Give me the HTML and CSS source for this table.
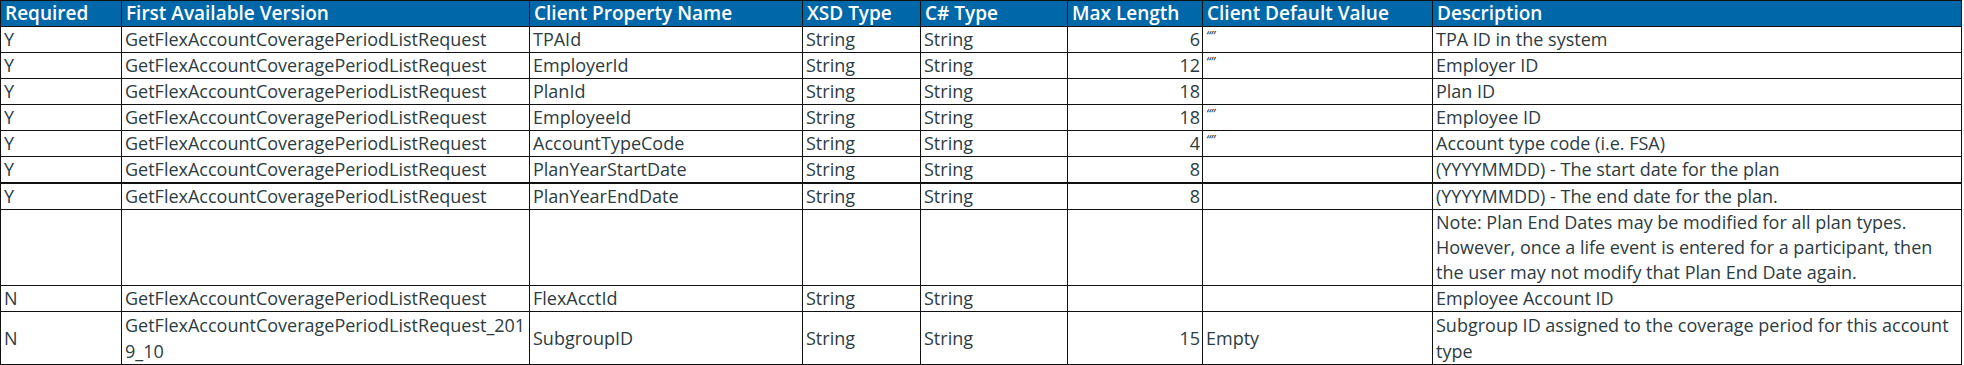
FILE: index.html
```html
<!DOCTYPE html>
<html>
<head>
<meta charset="utf-8">
<link rel="stylesheet" href="styles.css">
</head>
<body>
<table class="spec">
  <colgroup>
    <col class="c-req"><col class="c-ver"><col class="c-prop"><col class="c-xsd"><col class="c-cs"><col class="c-max"><col class="c-def"><col class="c-desc">
  </colgroup>
  <thead>
    <tr>
      <th>Required</th><th>First Available Version</th><th>Client Property Name</th><th>XSD Type</th><th>C# Type</th><th>Max Length</th><th>Client Default Value</th><th>Description</th>
    </tr>
  </thead>
  <tbody>
    <tr><td>Y</td><td>GetFlexAccountCoveragePeriodListRequest</td><td>TPAId</td><td>String</td><td>String</td><td class="num">6</td><td><span class="q">“”</span></td><td>TPA ID in the system</td></tr>
    <tr><td>Y</td><td>GetFlexAccountCoveragePeriodListRequest</td><td>EmployerId</td><td>String</td><td>String</td><td class="num">12</td><td><span class="q">“”</span></td><td>Employer ID</td></tr>
    <tr><td>Y</td><td>GetFlexAccountCoveragePeriodListRequest</td><td>PlanId</td><td>String</td><td>String</td><td class="num">18</td><td></td><td>Plan ID</td></tr>
    <tr><td>Y</td><td>GetFlexAccountCoveragePeriodListRequest</td><td>EmployeeId</td><td>String</td><td>String</td><td class="num">18</td><td><span class="q">“”</span></td><td>Employee ID</td></tr>
    <tr><td>Y</td><td>GetFlexAccountCoveragePeriodListRequest</td><td>AccountTypeCode</td><td>String</td><td>String</td><td class="num">4</td><td><span class="q">“”</span></td><td>Account type code (i.e. FSA)</td></tr>
    <tr class="thick"><td>Y</td><td>GetFlexAccountCoveragePeriodListRequest</td><td>PlanYearStartDate</td><td>String</td><td>String</td><td class="num">8</td><td></td><td>(YYYYMMDD) - The start date for the plan</td></tr>
    <tr><td>Y</td><td>GetFlexAccountCoveragePeriodListRequest</td><td>PlanYearEndDate</td><td>String</td><td>String</td><td class="num">8</td><td></td><td>(YYYYMMDD) - The end date for the plan.</td></tr>
    <tr><td></td><td></td><td></td><td></td><td></td><td></td><td></td><td>Note: Plan End Dates may be modified for all plan types. However, once a life event is entered for a participant, then the user may not modify that Plan End Date again.</td></tr>
    <tr><td>N</td><td>GetFlexAccountCoveragePeriodListRequest</td><td>FlexAcctId</td><td>String</td><td>String</td><td class="num"></td><td></td><td>Employee Account ID</td></tr>
    <tr class="last"><td>N</td><td>GetFlexAccountCoveragePeriodListRequest_2019_10</td><td>SubgroupID</td><td>String</td><td>String</td><td class="num">15</td><td>Empty</td><td>Subgroup ID assigned to the coverage period for this account type</td></tr>
  </tbody>
</table>
</body>
</html>
```

FILE: styles.css
```css
html, body {
  margin: 0;
  padding: 0;
  background: #ffffff;
}

.spec {
  border-collapse: collapse;
  table-layout: fixed;
  width: 1961px;
  font-family: "Open Sans", "Liberation Sans", sans-serif;
  font-size: 18px;
  color: #2d3c3f;
}

.c-req { width: 121px; }
.c-ver { width: 408px; }
.c-prop { width: 273px; }
.c-xsd { width: 118px; }
.c-cs { width: 147px; }
.c-max { width: 135px; }
.c-def { width: 230px; }
.c-desc { width: 529px; }

.spec th {
  background: #0068a9;
  color: #ffffff;
  font-weight: 600;
  font-size: 19px;
  text-align: left;
  line-height: 25px;
  padding: 0 4px;
  border: 1px solid #111111;
  white-space: nowrap;
}

.spec td {
  line-height: 25px;
  padding: 0 3px;
  border: 1px solid #111111;
  vertical-align: middle;
  word-break: break-all;
}

.spec tr.last td {
  line-height: 26px;
}

.spec td:last-child {
  word-break: normal;
}

.spec td.num {
  text-align: right;
  padding-right: 2px;
}

.spec tr.thick td {
  border-bottom: 2px solid #111111;
}

.q {
  font-size: 13px;
  font-style: italic;
  vertical-align: top;
  line-height: 16px;
}
```
